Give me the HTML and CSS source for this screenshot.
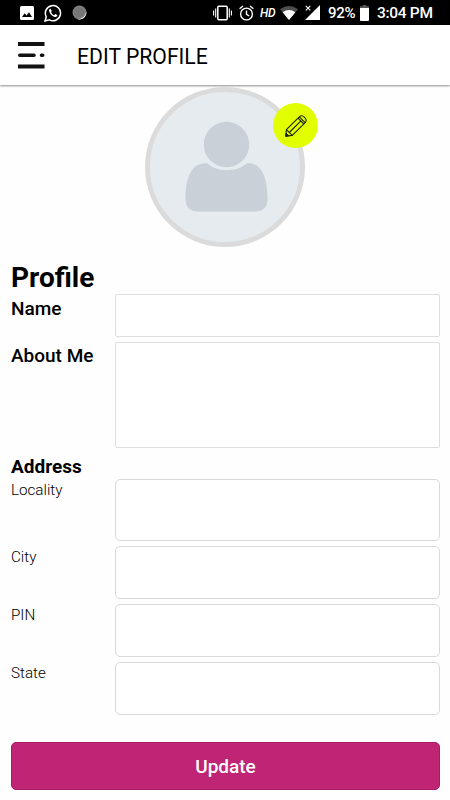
FILE: index.html
```html
<!DOCTYPE html>
<html lang="en">

<head>
  <meta charset="UTF-8" />
  <meta name="viewport" content="width=device-width, initial-scale=1.0" />
  <title>Edit Profile</title>
  <link rel="stylesheet" href="styles.css">
</head>

<body>
  <div class="status-bar">
    <div class="status-left">
      <svg width="14" height="14" viewBox="0 0 14 14">
        <rect width="14" height="14" rx="1.5" fill="#fff" />
        <path d="M2 11 L4.7 7.3 L6.5 9.4 L9 6.3 L12 11 Z" fill="#000" />
      </svg>
      <svg width="18" height="18" viewBox="0 0 18 18">
        <path d="M1 17 L2.3 12.8 A7.6 7.6 0 1 1 5.3 15.8 Z" fill="none" stroke="#fff" stroke-width="1.5" />
        <path d="M6.5 4.7 C5.2 4.8 4.7 6.2 5.2 7.6 C6.2 10.3 8.2 12.3 10.8 13 C12.2 13.3 13.4 12.4 13.4 11.1 L11.3 10 L10.2 11.2 C8.7 10.6 7.6 9.4 7 8 L7.9 7 Z" fill="#fff" />
      </svg>
      <svg width="15" height="15" viewBox="0 0 15 15">
        <circle cx="7.5" cy="7.5" r="7" fill="#777" />
        <circle cx="7.3" cy="7.3" r="5.8" fill="none" stroke="#929292" stroke-dasharray="1 1" />
        <path d="M14.3 6.5 A7 7 0 0 1 5.5 14.2 A9 9 0 0 0 14.3 6.5" fill="#eee" />
      </svg>
    </div>
    <div class="status-right">
      <svg width="19" height="16" viewBox="0 0 19 16" fill="none" stroke="#fff">
        <rect x="4.8" y="1.2" width="9.4" height="13.6" rx="1" stroke-width="1.5" />
        <path d="M2.7 3.5 V12.5 M.6 5.5 V10.5 M16.3 3.5 V12.5 M18.4 5.5 V10.5" stroke-width="1.1" />
      </svg>
      <svg class="alarm" width="15" height="16" viewBox="0 0 15 16" fill="none" stroke="#fff" stroke-width="1.4">
        <circle cx="7.5" cy="9" r="5.9" />
        <path d="M.6 3.7 L4 1 M14.4 3.7 L11 1 M7.5 5.5 V9.3 L10.2 11" />
      </svg>
      <span class="hd">HD</span>
      <svg class="wifi" width="18" height="14" viewBox="0 0 18 14">
        <path d="M0 3.2 Q9 -3.2 18 3.2 L9 14 Z" fill="#4d4d4d" />
        <path d="M2.6 6.2 Q9 1.6 15.4 6.2 L9 14 Z" fill="#fff" />
      </svg>
      <svg class="signal" width="15" height="15" viewBox="0 0 15 15">
        <path d="M15 0 V15 H0 Z" fill="#fff" />
        <path d="M0 0 H6.5 V6.5 H0 Z" fill="#000" />
        <path d="M.8 .8 L5.3 5.3 M5.3 .8 L.8 5.3" stroke="#fff" stroke-width="1.1" />
      </svg>
      <span class="percent">92%</span>
      <svg class="battery" width="9" height="16" viewBox="0 0 9 16">
        <path d="M2.7 0 H6.3 V1.3 H9 V4 H0 V1.3 H2.7 Z" fill="#555" />
        <path d="M0 3 H9 V15 Q9 16 8 16 H1 Q0 16 0 15 Z" fill="#fff" />
      </svg>
      <span class="time">3:04 PM</span>
    </div>
  </div>

  <header class="top-bar">
    <button class="menu-btn" aria-label="Menu">
      <svg width="27" height="27" viewBox="0 0 27 27">
        <path d="M0 2.1 H26.5 M0 24.5 H26.5" stroke="#111" stroke-width="4" />
        <path d="M1.8 13.3 H16 M23.5 13.3 H24.7" stroke="#111" stroke-width="3.6" stroke-linecap="round" />
      </svg>
    </button>
    <h1>EDIT PROFILE</h1>
  </header>

  <main class="container">
    <div class="avatar">
      <svg width="150" height="150" viewBox="0 0 150 150" fill="#c9d0d8">
        <circle cx="76.5" cy="52.5" r="22.7" />
        <path d="M57 71.3 C67 80.5 87 80.5 97 71.3 C110 69.5 117.5 84 117.5 106 Q117.5 119.5 105 119.5 H48 Q35.5 119.5 35.5 106 C35.5 84 43 69.5 57 71.3 Z" />
      </svg>
      <button class="edit-btn" aria-label="Edit photo">
        <svg width="22" height="22" viewBox="0 0 22 22" fill="none" stroke="#1c2200" stroke-width="1.1" stroke-linejoin="round">
          <path d="M.8 21.2 L1.4 14.6 L14.3 1.8 C17.5 -1.2 23.2 4.2 20.2 7.7 L7.3 20.4 Z" />
          <path d="M1.4 14.6 L7.3 20.4 M4.3 17.5 L16.2 5.7 M13 3.1 L18.9 9 M14.3 1.8 L20.2 7.7" />
          <path d="M.8 21.2 L1.1 18.4 L3.6 20.8 Z" fill="#1c2200" />
        </svg>
      </button>
    </div>

    <form id="profileForm">
      <h2>Profile</h2>
      <div class="row">
        <label class="main-label" for="name">Name</label>
        <input type="text" id="name" />
      </div>
      <div class="row about">
        <label class="main-label" for="about">About Me</label>
        <textarea id="about"></textarea>
      </div>

      <h3>Address</h3>
      <div class="row address locality">
        <label for="locality">Locality</label>
        <textarea id="locality"></textarea>
      </div>
      <div class="row address">
        <label for="city">City</label>
        <input type="text" id="city" />
      </div>
      <div class="row address">
        <label for="pin">PIN</label>
        <input type="text" id="pin" />
      </div>
      <div class="row address">
        <label for="state">State</label>
        <input type="text" id="state" />
      </div>

      <button type="submit">Update</button>
    </form>
  </main>
</body>

</html>
```
FILE: styles.css
```css
:root {
  --primary-color: #c02474;
  --primary-border: #a81a66;
  --accent-color: #e2ff00;
  --border-color: #dedede;
}

* {
  margin: 0;
  padding: 0;
  box-sizing: border-box;
}

body {
  height: 800px;
  font-family: Roboto, sans-serif;
  background-color: #fefefe;
  color: #000;
  overflow: hidden;
}

svg {
  display: block;
  flex-shrink: 0;
}

.status-bar {
  height: 25px;
  padding: 0 17px 0 20px;
  background-color: #000;
  color: #fff;
  display: flex;
  justify-content: space-between;
  align-items: center;
}

.status-left {
  display: flex;
  align-items: center;
  gap: 10px;
}

.status-right {
  display: flex;
  align-items: center;
  font-size: 15.5px;
  font-weight: 500;
  line-height: 25px;
  white-space: nowrap;
}

.alarm {
  margin-left: 7px;
}

.hd {
  width: 16px;
  margin-left: 6px;
  padding-top: 1px;
  font-size: 12px;
  font-style: italic;
  font-weight: 500;
  letter-spacing: -0.3px;
}

.wifi {
  margin-left: 4px;
}

.signal {
  margin-left: 7px;
}

.percent {
  width: 28px;
  margin-left: 8px;
  font-size: 15px;
  letter-spacing: -0.3px;
  padding-top: 2px;
}

.battery {
  margin-left: 4px;
}

.time {
  width: 56px;
  margin-left: 8px;
  padding-top: 2px;
  letter-spacing: -0.3px;
}

.top-bar {
  position: relative;
  height: 60px;
  padding-left: 18px;
  background-color: #fff;
  display: flex;
  align-items: center;
  gap: 32px;
  box-shadow: 0 1px 2px rgba(0, 0, 0, 0.45);
}

.menu-btn {
  border: none;
  background: none;
  cursor: pointer;
}

h1 {
  font-size: 21.2px;
  font-weight: 400;
  padding-top: 2px;
}

.container {
  padding: 2px 10px 0 11px;
}

.avatar {
  position: relative;
  width: 160px;
  height: 160px;
  margin-left: 134px;
  border: 5px solid #dbdbdb;
  border-radius: 50%;
  background-color: #e5ebee;
}

.edit-btn {
  position: absolute;
  top: 11px;
  right: -18px;
  width: 45px;
  height: 45px;
  border: none;
  border-radius: 50%;
  background-color: var(--accent-color);
  display: flex;
  justify-content: center;
  align-items: center;
  cursor: pointer;
}

h2 {
  height: 47px;
  padding-top: 14px;
  font-size: 28px;
  font-weight: 700;
  line-height: 33px;
}

h3 {
  height: 26px;
  padding-top: 3px;
  font-size: 19px;
  font-weight: 700;
  line-height: 22px;
}

.row {
  display: grid;
  grid-template-columns: 104px 1fr;
  height: 43px;
  margin-bottom: 5px;
}

.row.about {
  height: 106px;
}

.row.address {
  height: 53px;
}

.row.locality {
  height: 62px;
}

label {
  font-size: 15.2px;
  font-weight: 300;
  line-height: 22px;
}

.main-label {
  padding-top: 4px;
  font-size: 19px;
  font-weight: 500;
}

.about .main-label {
  padding-top: 3px;
}

input,
textarea {
  width: 100%;
  height: 100%;
  padding: 8px;
  font: inherit;
  border: 1px solid var(--border-color);
  border-radius: 2px;
  background-color: #fff;
  resize: none;
  outline: none;
}

.address input,
.address textarea {
  border-color: #d9d9d9;
  border-radius: 5px;
}

button[type="submit"] {
  width: 100%;
  height: 48px;
  margin-top: 22px;
  font-family: inherit;
  font-size: 19px;
  font-weight: 500;
  background-color: var(--primary-color);
  color: #fff;
  border: 1px solid var(--primary-border);
  border-radius: 5px;
  cursor: pointer;
}
```
